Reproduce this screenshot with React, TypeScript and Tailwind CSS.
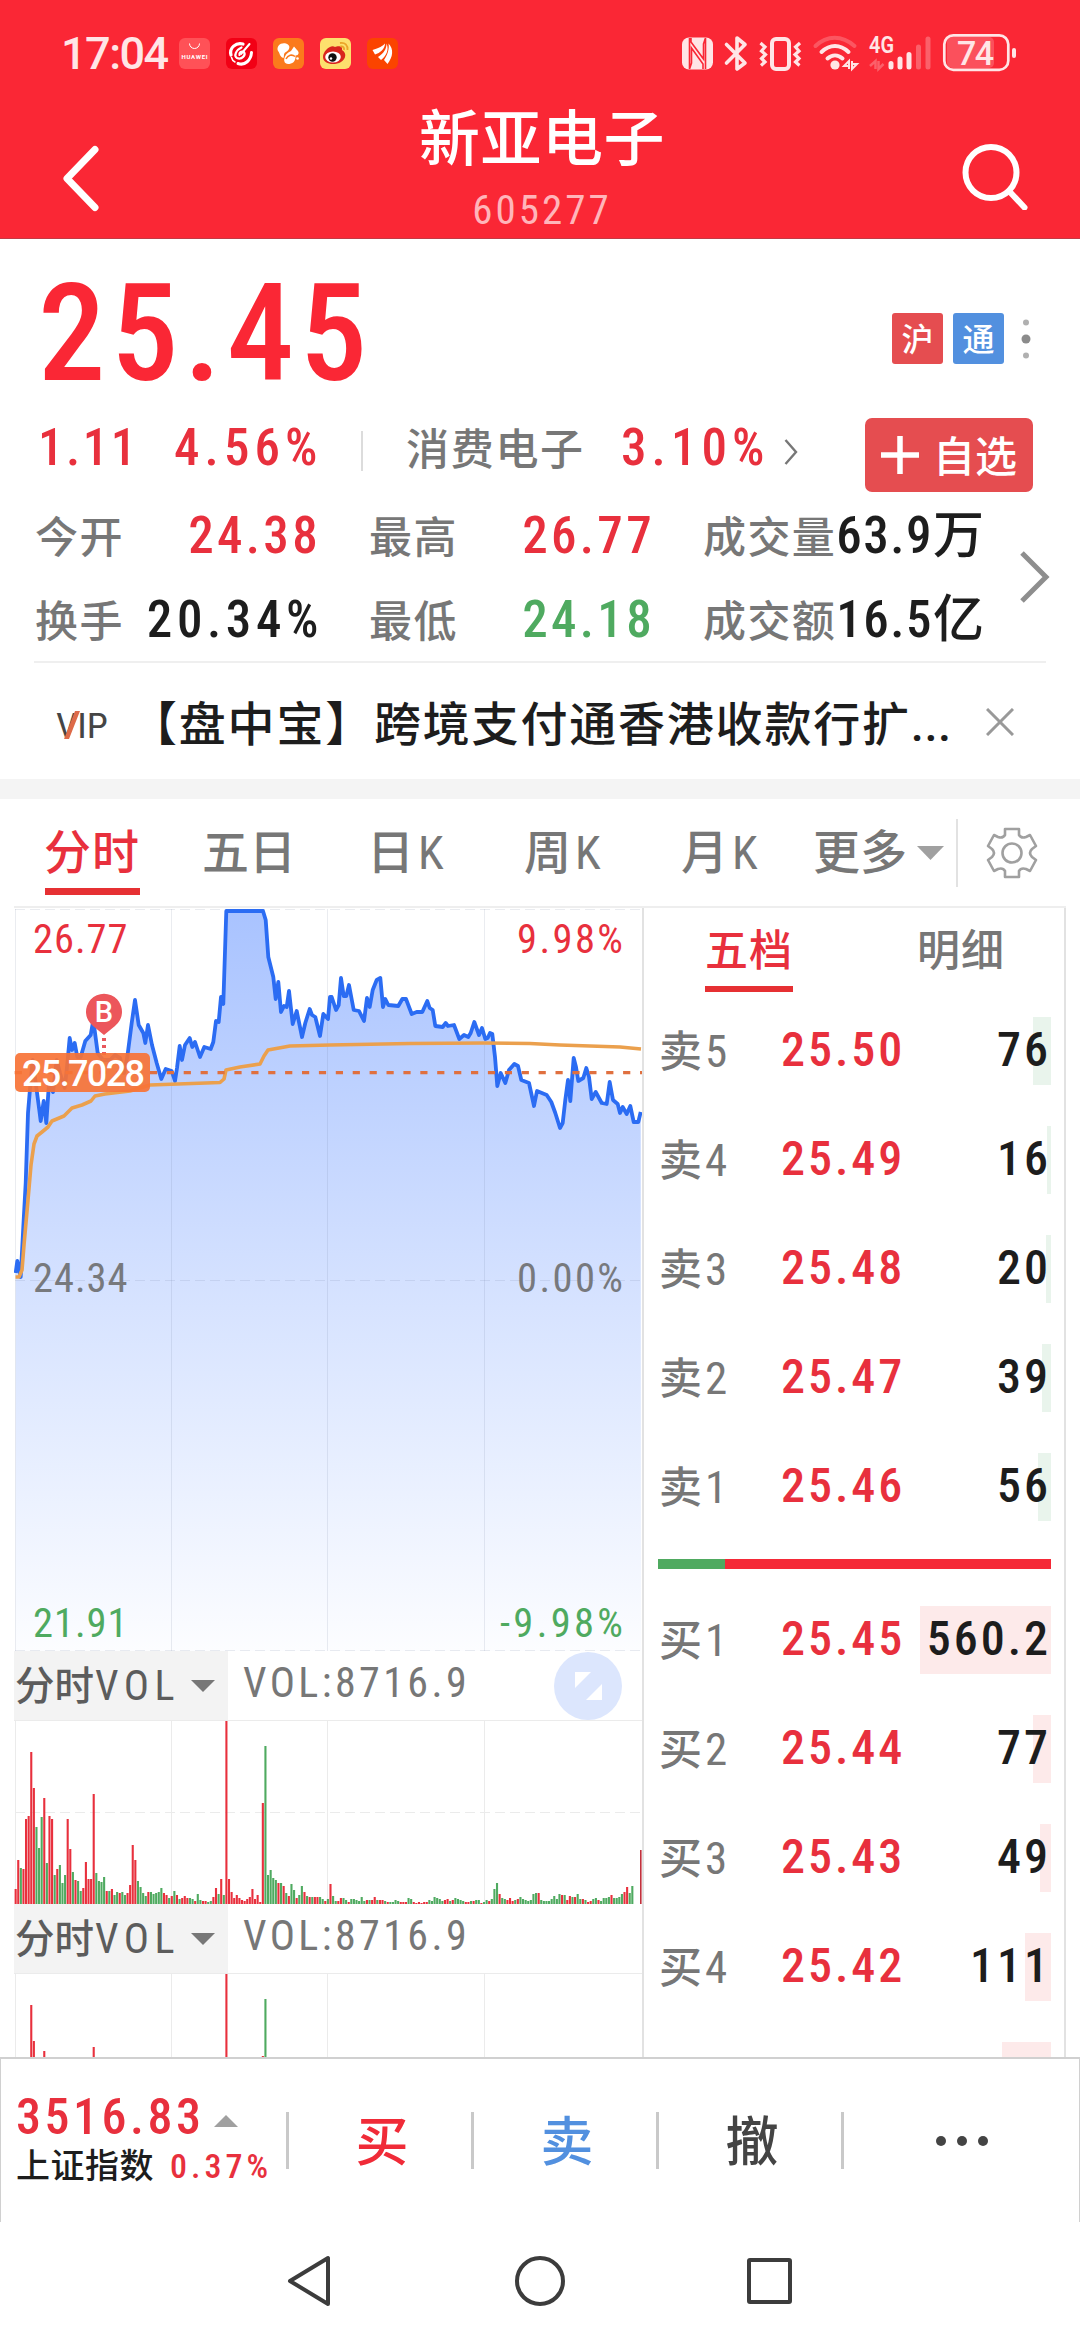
import React from 'react';

type Level = { label: string; price?: string; qty?: string; depth: number };

const UP = '#e8303d';
const DOWN = '#4faa60';

const sells: Level[] = [
    { label: '卖5', price: '25.50', qty: '76', depth: 18 },
    { label: '卖4', price: '25.49', qty: '16', depth: 4 },
    { label: '卖3', price: '25.48', qty: '20', depth: 5 },
    { label: '卖2', price: '25.47', qty: '39', depth: 9 },
    { label: '卖1', price: '25.46', qty: '56', depth: 13 },
];

const buys: Level[] = [
    { label: '买1', price: '25.45', qty: '560.2', depth: 131 },
    { label: '买2', price: '25.44', qty: '77', depth: 18 },
    { label: '买3', price: '25.43', qty: '49', depth: 11 },
    { label: '买4', price: '25.42', qty: '111', depth: 26 },
    { label: '', depth: 49 },
];

// Price and average lines, in page pixels (the chart's viewBox starts at 14,908)
const priceLine =
    '15.7,1273 17.3,1261 20.7,1277 23.3,1227 25.7,1183 28,1113 30.5,1083 32.7,1060 36,1085 39.3,1110 40.7,1121 43.7,1101 46.3,1123 49,1083 53,1092 56.7,1060 60,1073 64.7,1088 67,1067 69.7,1038 72,1050 74.7,1043 77.3,1057 80.7,1057 85.3,1041 90.7,1035 93.3,1020 97.7,1053 103,1060 110,1060 115,1055 120,1058 124,1073 127.3,1057 131.7,1023 135,1000 138.7,1025 143.3,1033 145.3,1043 148,1025 152,1045 156.7,1063 161.3,1079 165.7,1069 171.7,1071 175,1081 177,1068 179.7,1046 182,1060 185,1045 189.7,1038 192.3,1047 195,1042 200,1057 204.3,1047 210.7,1049 213.3,1042 216,1021 218.7,1022 221,997 223.3,1004 226.3,911 263,911 265.7,920 268.3,957 273.3,977 275.7,999 278.3,982 281,1012 284,1006 286.7,1007 289,991 292.7,1024 296.7,1011 302,1037 305.3,1023 309.7,1009 312,1015 315.3,1017 320,1036 323.3,1014 328,1019 330,997 331.7,997 336,1010 338.7,1005 341,978 343.7,996 346.3,996 349,985 353.7,1010 359,1011 364,1021 367,998 369.7,1007 372.7,990 376.7,980 380.3,978 383,1007 385.3,999 388.3,1005 398.3,1006 402.3,999 406,999 411.7,1014 416.7,1012 422.3,1012 427.3,1001 429.7,1008 432.7,1010 435.3,1026 442.7,1027 445.7,1023 448,1026 454,1025 459.3,1039 464,1035 468.3,1037 470.7,1033 474.3,1022 479,1035 482,1028 485.3,1039 487.7,1038 490,1033 492.3,1034 495,1057 497.3,1086 500.7,1073 505.3,1083 509,1070 514.3,1064 518,1066 521.3,1080 529,1083 534,1106 537,1091 546.7,1095 551.3,1102 555.3,1113 560,1128 562.7,1123 565.3,1100 568,1080 570.3,1101 573.7,1058 576,1067 578.3,1081 583.3,1078 586.3,1068 589,1077 591.7,1099 595.7,1092 601.7,1103 606.7,1104 609.7,1082 613,1100 617.7,1104 620,1113 622.7,1107 626.7,1114 630.3,1106 633.7,1122 638.3,1122 640.7,1112';
const avgLine =
    '15.5,1277 19,1277 22,1270 24,1245 28,1200 31,1165 34,1144 37,1136 42,1132 48,1127 52,1121 64,1116 72,1108 82,1105 91,1101 95,1096 105,1094 130,1091 150,1085 220,1082.5 224,1079 226,1070 240,1067 260,1064 264,1056 268,1050 290,1046 330,1045 410,1043.5 484,1043 530,1043.5 560,1045 620,1047 641,1049';

// Minute volumes as bar heights; falling minutes are negative
const volumes = [
    15, 44, -36, 35, 85, 88, 152, 116, -77, -56, -87, 106, -41, 88, 85, -29, 35, -39, -21, -29, 85, 55, -32, 24, -23, -13, 16, 42, 25, 25,
    110, -31, -23, -22, -27, 13, -13, 15, -9, -12, 11, -12, -9, 11, 19, 59, 44, -23, -17, -11, -8, 12, -12, -10, -11, -12, -16, 11, 9, -6,
    8, -13, 9, -5, 6, 8, 6, -6, -5, 3, -10, -4, 3, 3, -2, -3, 7, 16, -10, 25, -9, 183, 25, 12, 6, 9, 6, 4, 3, 5,
    7, 15, 5, 9, 2, 101, -158, -29, -34, -26, -24, 21, -21, 18, -11, 8, -20, -14, 6, -9, -18, 12, -8, 7, -7, 7, 7, -7, -5, 3,
    -5, 20, -8, -3, 3, 6, -6, -4, 2, -5, -5, -4, -3, -7, -3, 4, -4, 4, 7, -4, 4, 4, -3, 2, -2, -2, -4, -3, 2, 2,
    2, -6, -5, 2, 1, 2, 1, 2, 2, -4, -3, -7, -6, -5, -3, 4, 5, -3, 4, -6, -5, -4, -3, 2, 2, -3, 3, -4, -4, 1,
    -2, -4, 3, -5, -15, -21, 10, -6, -5, 4, 6, 3, -4, 5, -7, -5, -4, -3, -4, -10, -11, 11, -4, -3, -3, -3, -5, -8, -5, -10,
    9, -9, 4, 8, -7, 7, -10, -5, 5, -4, 2, 3, -5, -6, 4, -3, -6, -6, -7, 9, -6, -6, -7, -10, 12, 17, -11, -18, 23, -25,
];

function VolumeChart({ height }: { height: number }) {
    return (
        <svg width="628" height={height} viewBox={`14 0 628 ${height}`} className="block">
            <g stroke="#ebebeb" strokeWidth="1">
                <path d="M14 .5H642M15.5 0V184M171.5 0V184M327.5 0V184M484.5 0V184" />
                <path d="M15 92.5H642" strokeDasharray="10 5" />
            </g>
            {volumes.slice(0, 238).map((v, i) => (
                <rect key={i} x={14.6 + i * 2.602} y={184 - Math.abs(v)} width="2.1" height={Math.abs(v)} fill={v > 0 ? UP : DOWN} />
            ))}
            <rect x="640" y="130" width="1.6" height="54" fill="#c2303c" />
        </svg>
    );
}

function VolumeHeader({ expand = false }: { expand?: boolean }) {
    return (
        <div className="flex h-[69px] w-[628px] items-center">
            <div className="flex h-full w-[214px] items-center justify-between bg-[#f3f3f3] pr-[13px] pl-px text-[39.500px] text-[#5c5c5c]">
                <span>分时<span className="ml-px text-[42px] font-normal tracking-[5.5px]">VOL</span></span>
                <svg width="24" height="12"><path d="M0 0H24L12 12Z" fill="#777" /></svg>
            </div>
            <span className="ml-[15px] pb-[6px] text-[42px] font-normal tracking-[3.4px] text-[#777]">VOL:8716.9</span>
            {expand && (
                <svg width="68" height="68" viewBox="0 0 68 68" className="mr-[20px] ml-auto">
                    <circle cx="34" cy="34" r="34" fill="#dce6fd" />
                    <path d="M21 20H37L21 36ZM48 32V48H32Z" fill="#fff" />
                </svg>
            )}
        </div>
    );
}

function PriceChart() {
    return (
        <svg width="628" height="743" viewBox="14 908 628 743" className="block">
            <defs>
                <linearGradient id="area" x1="0" y1="910" x2="0" y2="1651" gradientUnits="userSpaceOnUse">
                    <stop offset="0" stopColor="#a9c3ff" />
                    <stop offset="0.5" stopColor="#d4e1ff" />
                    <stop offset="1" stopColor="#fcfdff" />
                </linearGradient>
            </defs>
            <polygon points={`15.7,1651 ${priceLine} 641,1651`} fill="url(#area)" />
            <g stroke="#5b6b8c" strokeOpacity="0.13" strokeWidth="1">
                <path d="M15.5 909V1651M171.5 909V1651M327.5 909V1651M484.5 909V1651" />
                <path d="M15 909.5H642M15 1280.5H642M15 1650.5H642" strokeDasharray="10 5" />
            </g>
            <polyline points={priceLine} fill="none" stroke="#2b6cf3" strokeWidth="3.8" strokeLinejoin="round" />
            <polyline points={avgLine} fill="none" stroke="#eba04d" strokeWidth="3.6" strokeLinejoin="round" />
            <path d="M14.7 1072.7H642" stroke="#e0703f" strokeWidth="3.2" strokeDasharray="7.2 9.7" />

            <path d="M104 1038V1060" stroke="#e8575c" strokeWidth="4" strokeDasharray="3 4" />
            <path d="M104 1035L93 1026A18 18 0 1 1 115 1026Z" fill="#ec565b" />
            <g fontFamily="Roboto, sans-serif" fontWeight="500" fill="#fff">
                <text x="104" y="1022" textAnchor="middle" fontSize="29">B</text>
                <rect x="15" y="1053" width="135" height="39" rx="5" fill="#f77336" fillOpacity="0.92" />
                <text x="22" y="1086" fontSize="36" textLength="123">25.7028</text>
            </g>

            <g fontSize="40.5" fontWeight="450">
                <g fill={UP}>
                    <text x="33" y="953" textLength="94.500">26.77</text>
                    <text x="517" y="953" textLength="106">9.98%</text>
                </g>
                <g fill="#77797d">
                    <text x="33" y="1292" textLength="94.500">24.34</text>
                    <text x="517" y="1292" textLength="106">0.00%</text>
                </g>
                <g fill={DOWN}>
                    <text x="33" y="1637" textLength="94.500">21.91</text>
                    <text x="500" y="1637" textLength="123">-9.98%</text>
                </g>
            </g>
        </svg>
    );
}

function BookRow({ level, tint }: { level: Level; tint: string }) {
    return (
        <div className="relative flex h-[109px] shrink-0 items-center pr-[13px] pl-[15px] text-[48px] tracking-[0.062em]">
            <div className={`absolute top-[20px] right-[13px] h-[68px] ${tint}`} style={{ width: level.depth }} />
            <span className="relative w-[122px] text-[43px] tracking-[1px] text-[#777]">
                {level.label.slice(0, 1)}
                <span className="ml-[2px] text-[45px] font-normal">{level.label.slice(1)}</span>
            </span>
            <span className="relative pb-[4px] text-[#e8303d]">{level.price}</span>
            <span className="relative ml-auto pb-[4px] text-[#1d1d1d]">{level.qty}</span>
        </div>
    );
}

function Stat({ label, value, color }: { label: string; value: string; color: string }) {
    return (
        <div className="flex w-[283px] items-center justify-between whitespace-nowrap">
            <span className="pt-[8px] text-[43px] tracking-[1.4px] text-[#777]">{label}</span>
            <span className={`pt-[2px] text-[51px] ${color}`}>{value}</span>
        </div>
    );
}

function StatusBar() {
    return (
        <div className="flex h-[106px] items-center pl-[61px] font-['Roboto',sans-serif] text-[#ffe5e6]">
            <span className="w-[118px] text-[45px] tracking-[-1.5px]">17:04</span>
            <svg width="219" height="31" viewBox="0 0 219 31">
                <rect width="31" height="31" rx="6" fill="#ff5157" />
                <path d="M10.500 5.500a5 5 0 0 0 10 0" fill="none" stroke="#fff" strokeWidth="1" />
                <text x="2.500" y="20.500" fontSize="6" fontWeight="700" fill="#fff" textLength="26">HUAWEI</text>

                <rect x="47" width="31" height="31" rx="6" fill="#f20015" />
                <g fill="none" stroke="#fff" strokeLinecap="round">
                    <path d="M64 6C57 4 50 10 52 17" strokeWidth="3.200" />
                    <path d="M52.500 19.500C53 22 54 23 56 24" strokeWidth="1.500" />
                    <path d="M62.500 9.500C57 12 54.500 18 58 20C63 22 67 17 65 14C62 12.500 60 15 60.500 17" strokeWidth="2.200" />
                    <path d="M70.500 6L62 16" strokeWidth="2" />
                    <path d="M59 25.500C66 28 72 22 72.500 14.500" strokeWidth="3" />
                </g>

                <rect x="94" width="31" height="31" rx="6" fill="#fb7a1c" />
                <path d="M99 13C97 8 102 4 107 5.500C112 7 111 12 107 14C104 15.500 105.500 18 104.500 20C100.500 19 101 15 99 13Z" fill="#fff" />
                <path d="M112 13L115 8.500L118 12C120.500 14 120 17.500 116.500 17.500C117 24 113 26 109 26C103 26 104 16 112 13Z" fill="#fff" />
                <path d="M107 21C109 17 113 16 116 18.500" fill="none" stroke="#fb7a1c" strokeWidth="1.500" />
                <circle cx="118.500" cy="20.500" r="1.300" fill="#fff" />

                <rect x="141" width="31" height="31" rx="6" fill="#fde06d" />
                <path d="M144 19C144 13 152 6 156 9C158 8 164 7 163 12C168 15 167 21 162 24C155 28 144 26 144 19Z" fill="#d9251d" />
                <ellipse cx="154" cy="19" rx="7.800" ry="5.500" fill="#fff" />
                <circle cx="153.500" cy="19.500" r="4.200" fill="#111" />
                <circle cx="152" cy="20.500" r="1.200" fill="#fff" />
                <path d="M161 5C166 4 169 7.500 168.500 12M161.500 8.500C164 8 165.500 9.500 165 12" fill="none" stroke="#eba529" strokeWidth="1.800" />

                <rect x="188" width="31" height="31" rx="6" fill="#fb4400" />
                <path d="M193.500 12C200 10 204 8 206 5.500C206 11 201 15 196 16.500Z" fill="#fff" />
                <path d="M199 19C205 15 207.500 11 207.500 5.500C210.500 12 207 18 202 22Z" fill="#fff" />
                <path d="M205 22C208.500 17 210.500 11 209.500 5.500C215 11 214 19 208.500 26Z" fill="#fff" />
            </svg>
            <svg width="338" height="40" viewBox="680 32 338 40" className="mr-[61px] ml-auto" fill="none" stroke="currentColor">
                <rect x="681" y="36.500" width="31" height="32" rx="7" fill="currentColor" stroke="none" />
                <path d="M688.500 37V68L690.500 62V47L702 63V68M704.500 68V37L702.500 43V58L690 41V37" stroke="#fa2735" strokeWidth="1.600" />
                <path d="M725.500 43.500L744 62L736 68V37L744 43.500L725.500 62" strokeWidth="3.600" strokeLinejoin="round" strokeLinecap="round" />
                <rect x="771" y="38" width="17" height="30" rx="4" strokeWidth="4" />
                <path d="M759.500 42L764 46L760.500 50L764.500 53.500L760.500 57.500L764 61L760 64.500M799 42L794.500 46L798 50L794 53.500L798 57.500L794.500 61L798.500 64.500" strokeWidth="3.200" />
                <g strokeWidth="4" strokeLinecap="round">
                    <path d="M814.500 45C826 34 841 34 853.500 45" opacity="0.25" />
                    <path d="M820.500 51C829 43 839 43 847.500 51" />
                    <path d="M826.500 57.500C831 53.500 837 53.500 841.500 57.500" />
                </g>
                <circle cx="834" cy="64" r="4.600" fill="currentColor" stroke="none" />
                <path d="M848 68V60L843 65H847M851 60V68L856 63H852" strokeWidth="2" />
                <text x="868" y="51.500" fontSize="23" fontWeight="600" fill="currentColor" stroke="none" textLength="25" lengthAdjust="spacingAndGlyphs">4G</text>
                <path d="M874.500 68V60L869 65M877.500 60V68L882.500 63" strokeWidth="2.500" opacity="0.3" />
                <g strokeWidth="5" strokeLinecap="round">
                    <path d="M890 62.500V66M899 58V66M908 53.500V66" />
                    <path d="M917.500 46V66M927 38V66" opacity="0.3" />
                </g>
                <rect x="946" y="36" width="47" height="31" rx="5" fill="currentColor" fillOpacity="0.22" stroke="none" />
                <rect x="943.300" y="34.300" width="64" height="34.500" rx="9" strokeWidth="2.700" />
                <path d="M1013 49V55" strokeWidth="4" strokeLinecap="round" />
                <text x="956" y="64" fontSize="34" fontWeight="500" fill="currentColor" stroke="none" textLength="37">74</text>
            </svg>
        </div>
    );
}

const App: React.FC = () => {
    return (
        <div lang="zh-CN" className="flex h-[2340px] w-[1080px] flex-col overflow-hidden bg-white font-['Roboto_Condensed','Noto_Sans_CJK_SC',sans-serif] leading-none font-medium">
            <header className="h-[239px] shrink-0 border-b border-[#c23a45] bg-[#fa2735]">
                <StatusBar />
                <div className="flex h-[132px] items-start justify-between pr-[52px] pl-[62px]">
                    <svg width="60" height="70" viewBox="0 0 60 70" className="mt-[38px]" fill="none" stroke="#fff" strokeWidth="7" strokeLinecap="round" strokeLinejoin="round">
                        <path d="M33 5.500L5 34.500L33 63.500" />
                    </svg>
                    <div className="flex flex-col items-center pl-[2px]">
                        <h1 className="pt-[2px] text-[61px] leading-[64px] tracking-[0.5px] text-white">新亚电子</h1>
                        <p className="mt-[16px] text-[41px] leading-[44px] font-normal tracking-[3px] text-[#ffb5ba]">605277</p>
                    </div>
                    <svg width="68" height="68" viewBox="0 0 68 68" className="mt-[36px]" fill="none" stroke="#fff" strokeWidth="6" strokeLinecap="round">
                        <circle cx="31" cy="30.500" r="25.500" />
                        <path d="M49 49L64.500 65.500" />
                    </svg>
                </div>
            </header>

            <section className="h-[540px] shrink-0">
                <div className="flex h-[179px] items-center justify-between pr-[49px] pl-[38px]">
                    <span className="pt-[11px] text-[135px] tracking-[0.04em] text-[#fa2735]">25.45</span>
                    <div className="flex items-center gap-[10px] pt-[20px] text-[32px] text-white">
                        <span className="flex size-[51px] items-center justify-center rounded-[3px] bg-[#e54d50] pt-[2px]">沪</span>
                        <span className="flex size-[51px] items-center justify-center rounded-[3px] bg-[#5290df] pt-[2px]">通</span>
                        <svg width="10" height="42" className="ml-[7px]" fill="#b0b0b0">
                            <circle cx="5" cy="4.500" r="3" />
                            <circle cx="5" cy="21" r="4.500" fill="#8b8b8b" />
                            <circle cx="5" cy="37.500" r="3" />
                        </svg>
                    </div>
                </div>
                <div className="flex h-[74px] items-center pr-[47px] pl-[38px] text-[51px] tracking-[0.1em] text-[#e8303d]">
                    <span className="w-[136px] pb-[15px] tracking-[0.05em]">1.11</span>
                    <span className="w-[187px] pb-[15px]">4.56%</span>
                    <span className="mb-[8px] h-[40px] w-[2px] bg-[#dcdcdc]" />
                    <span className="ml-[43px] w-[215px] pb-[9px] text-[43px] tracking-[1.700px] text-[#777]">消费电子</span>
                    <span className="w-[161px] pb-[15px]">3.10%</span>
                    <svg width="14" height="26" className="mb-[6px] ml-[2px]" fill="none" stroke="#777" strokeWidth="2.400"><path d="M1.500 1L12 13L1.500 25" /></svg>
                    <button className="ml-auto flex h-[74px] w-[168px] items-center gap-[14px] rounded-[7px] bg-[#e54d50] pl-[16px] text-[42px] tracking-normal text-white">
                        <svg width="38" height="38" stroke="#fff" strokeWidth="5.500"><path d="M0 19H38M19 0V38" /></svg>
                        <span className="pt-[6px]">自选</span>
                    </button>
                </div>
                <div className="flex h-[169px] justify-between pr-[29px] pl-[35px]">
                    <div className="flex flex-col">
                        <div className="flex h-[84px] items-center gap-[51px]">
                            <Stat label="今开" value="24.38" color="-mr-[3px] tracking-[0.065em] text-[#e8303d]" />
                            <Stat label="最高" value="26.77" color="-mr-[3px] tracking-[0.065em] text-[#e8303d]" />
                            <Stat label="成交量" value="63.9万" color="mr-px tracking-[0.03em] text-[#1d1d1d]" />
                        </div>
                        <div className="flex h-[84px] items-center gap-[51px]">
                            <Stat label="换手" value="20.34%" color="-mr-[5px] tracking-[0.09em] text-[#1d1d1d]" />
                            <Stat label="最低" value="24.18" color="-mr-[3px] tracking-[0.065em] text-[#4faa60]" />
                            <Stat label="成交额" value="16.5亿" color="mr-px tracking-[0.03em] text-[#1d1d1d]" />
                        </div>
                    </div>
                    <svg width="32" height="54" className="mt-[58px]" fill="none" stroke="#8e8e8e" strokeWidth="5"><path d="M3 3L27 27L3 51" /></svg>
                </div>
                <div className="mx-[34px] flex h-[118px] items-center border-t-2 border-[#efefef] pr-[32px] pl-[22px]">
                    <svg width="60" height="48" viewBox="0 0 60 48" className="mt-[8px] overflow-visible">
                        <text x="0" y="37" fontSize="35" fontWeight="400" fill="#454545" textLength="52" lengthAdjust="spacingAndGlyphs">VIP</text>
                        <path d="M8.500 37L19 10H24L13 38H8Z" fill="#dd6a48" />
                    </svg>
                    <span className="ml-[14px] pt-[6px] text-[47px] tracking-[1.8px] whitespace-nowrap text-[#1d1d1d]">
                        【盘中宝】跨境支付通香港收款行扩<span className="tracking-[0.5px]">...</span>
                    </span>
                    <svg width="28" height="28" className="mt-[2px] ml-auto" stroke="#999" strokeWidth="3"><path d="M1 1L27 27M27 1L1 27" /></svg>
                </div>
            </section>

            <div className="h-[20px] shrink-0 bg-[#f4f4f4]" />

            <nav className="mx-[14px] flex h-[109px] shrink-0 items-center border-b-2 border-[#eee] text-[47px] text-[#777]">
                <div className="relative ml-[30px] w-[158px] tracking-[1px] text-[#e8303d]">
                    分时
                    <span className="absolute top-[59px] left-px h-[7px] w-[95px] bg-[#e63033]" />
                </div>
                <span className="w-[165px]">五日</span>
                <span className="w-[157px] tracking-[4px]">日<span className="font-normal">K</span></span>
                <span className="w-[157px] tracking-[4px]">周<span className="font-normal">K</span></span>
                <span className="w-[132px] tracking-[4px]">月<span className="font-normal">K</span></span>
                <span>更多</span>
                <svg width="27" height="14" className="ml-[10px]"><path d="M0 0H27L13.500 14Z" fill="#a0a0a0" /></svg>
                <span className="ml-[12px] h-[68px] w-[2px] bg-[#e2e2e2]" />
                <svg width="52" height="52" viewBox="0 0 52 52" className="ml-[28px]" fill="none" stroke="#a0a0a0" strokeWidth="2.600" strokeLinejoin="round">
                    <path d="M19 2H33V8Q35 11.500 40 10L44 8L50 19L46 22Q42 26 46 30L50 33L44 44L40 42Q35 40.500 33 44V50H19V44Q17 40.500 12 42L8 44L2 33L6 30Q10 26 6 22L2 19L8 8L12 10Q17 11.500 19 8Z" />
                    <circle cx="26" cy="26" r="9.500" />
                </svg>
            </nav>

            <main className="mx-[14px] flex h-[1149px] shrink-0 overflow-hidden">
                <div className="w-[628px] shrink-0">
                    <PriceChart />
                    <VolumeHeader expand />
                    <VolumeChart height={184} />
                    <VolumeHeader />
                    <VolumeChart height={184} />
                </div>
                <div className="flex w-[424px] flex-col border-x-2 border-[#e2e2e2]">
                    <div className="flex h-[89px] shrink-0 items-start pt-[22px] text-[43px] tracking-[1px] text-[#777]">
                        <div className="relative ml-[61px] w-[212px] text-[#e8303d]">
                            五档
                            <span className="absolute top-[56px] left-0 h-[6px] w-[88px] bg-[#e63033]" />
                        </div>
                        <span>明细</span>
                    </div>
                    {sells.map((s) => <BookRow key={s.label} level={s} tint="bg-[#e9f4ec]" />)}
                    <div className="mt-[17px] mr-[13px] mb-[17px] ml-[14px] flex h-[10px] shrink-0">
                        <div className="w-[67px] bg-[#4faa60]" />
                        <div className="flex-1 bg-[#f52937]" />
                    </div>
                    {buys.map((b) => <BookRow key={b.label} level={b} tint="bg-[#fdeaea]" />)}
                </div>
            </main>

            <footer className="flex h-[165px] shrink-0 items-center border-x border-t-2 border-[#d0d0d0] text-[53px]">
                <div className="w-[270px] pb-[4px] pl-[15px]">
                    <div className="flex items-center gap-[10px]">
                        <span className="text-[50px] leading-[54px] tracking-[0.07em] text-[#e8303d]">3516.83</span>
                        <svg width="24" height="12" className="mt-[8px]"><path d="M0 12H24L12 0Z" fill="#a0a0a0" /></svg>
                    </div>
                    <div className="flex items-center gap-[16px] text-[34px] leading-[44px] tracking-[0.5px] whitespace-nowrap">
                        <span className="text-[#1d1d1d]">上证指数</span>
                        <span className="tracking-[4px] text-[#e8303d]">0.37%</span>
                    </div>
                </div>
                <span className="ml-[15px] h-[57px] w-[3px] bg-[#c9c9c9]" />
                <span className="w-[182px] pt-[5px] pl-[4px] text-center text-[#f02b38]">买</span>
                <span className="h-[57px] w-[3px] bg-[#c9c9c9]" />
                <span className="w-[182px] pt-[5px] pl-[4px] text-center text-[#5290df]">卖</span>
                <span className="h-[57px] w-[3px] bg-[#c9c9c9]" />
                <span className="w-[182px] pt-[5px] pl-[4px] text-center text-[#444]">撤</span>
                <span className="h-[57px] w-[3px] bg-[#c9c9c9]" />
                <svg width="54" height="12" className="ml-[91px]" fill="#444">
                    <circle cx="6" cy="6" r="5" />
                    <circle cx="27" cy="6" r="5" />
                    <circle cx="48" cy="6" r="5" />
                </svg>
            </footer>

            <div className="flex flex-1 justify-center pt-[33px]">
                <svg width="510" height="52" viewBox="285 2255 510 52" fill="none" stroke="#3c3c3c" strokeWidth="4" strokeLinejoin="round">
                    <path d="M328 2258V2304L290 2281Z" />
                    <circle cx="540" cy="2281" r="23" />
                    <rect x="749" y="2260" width="41" height="42" rx="1" />
                </svg>
            </div>
        </div>
    );
};

export default App;
